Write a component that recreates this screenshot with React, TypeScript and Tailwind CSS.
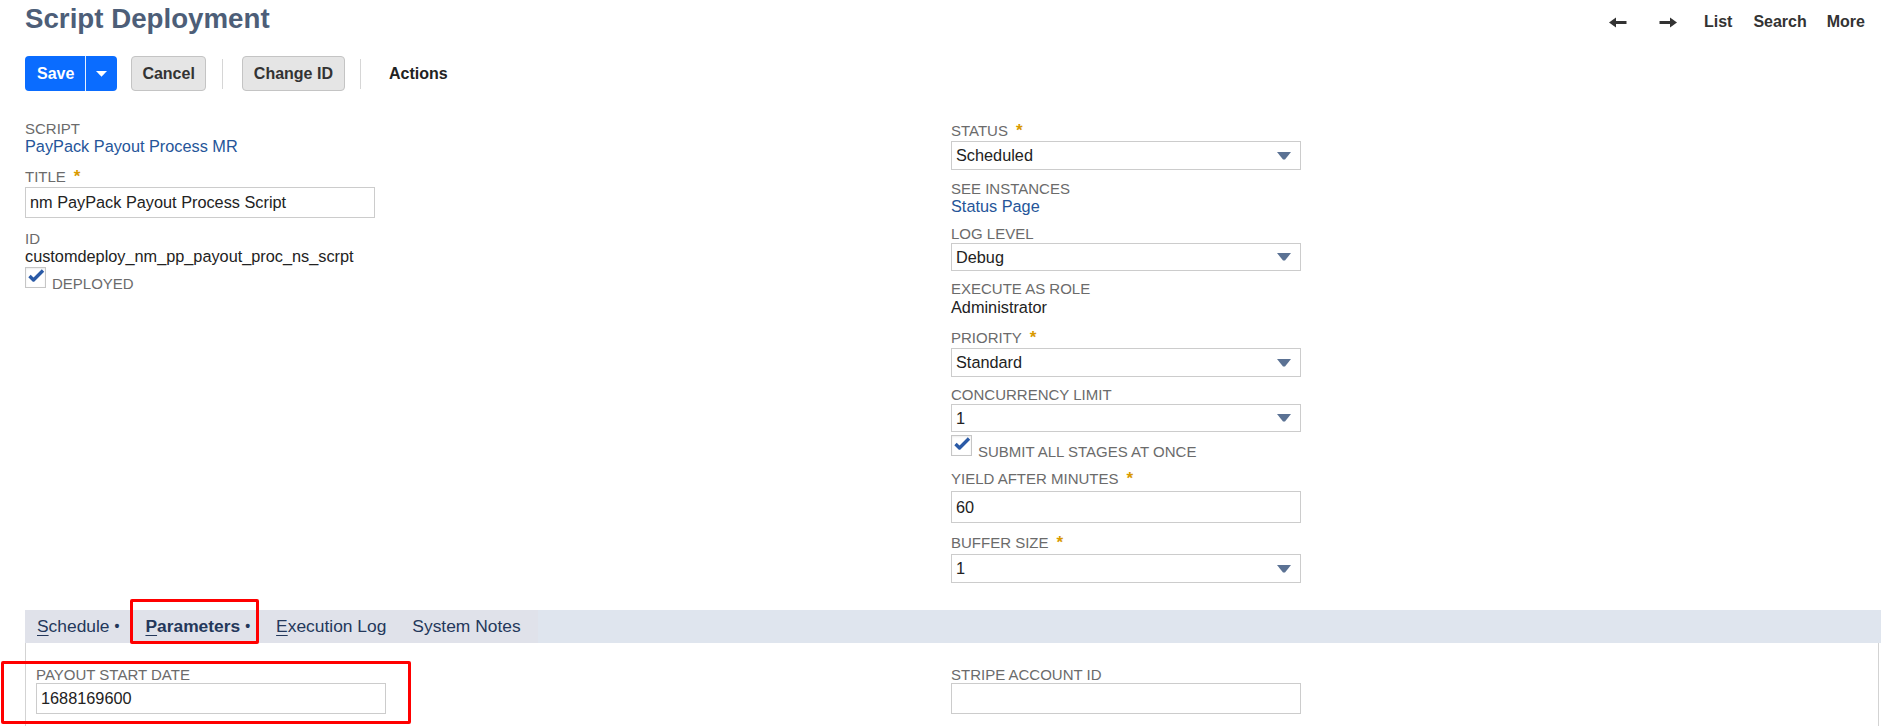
import type { ReactNode } from "react";

const Label = ({
  children,
  req,
  className = "",
}: {
  children: ReactNode;
  req?: boolean;
  className?: string;
}) => (
  <div
    className={`h-[17px] text-[15px] leading-[17px] uppercase text-[#6b6b6b] whitespace-nowrap ${className}`}
  >
    {children}
    {req && (
      <span className="ml-[8px] text-[17px] leading-none font-bold text-[#d99a00]">*</span>
    )}
  </div>
);

const Value = ({ children, className = "" }: { children: ReactNode; className?: string }) => (
  <div className={`text-[16.3px] leading-[19px] text-[#222] ${className}`}>{children}</div>
);

const Link = ({ children }: { children: ReactNode }) => (
  <a className="block text-[16.3px] leading-[19px] text-[#255599] cursor-pointer">{children}</a>
);

const TextInput = ({ value, className = "" }: { value: string; className?: string }) => (
  <div
    className={`w-[350px] border border-[#cccccc] bg-white flex items-center pl-[4px] text-[16.3px] text-[#222] ${className}`}
  >
    {value}
  </div>
);

const Select = ({ value, className = "h-[29px]" }: { value: string; className?: string }) => (
  <div
    className={`w-[350px] border border-[#cccccc] bg-white flex items-center justify-between pl-[4px] pr-[9px] text-[16.3px] text-[#222] ${className}`}
  >
    <span>{value}</span>
    <svg width="14" height="8" viewBox="0 0 14 8">
      <polygon points="0,0 14,0 8,7.5 6,7.5" fill="#5b7294" />
    </svg>
  </div>
);

const CheckRow = ({ label, className = "" }: { label: string; className?: string }) => (
  <div className={`flex items-end gap-[6px] ${className}`}>
    <div className="w-[21px] h-[21px] border border-[#c6c6c6] bg-white shadow-[inset_0_1px_2px_rgba(0,0,0,0.08)]">
      <svg width="19" height="19" viewBox="0 0 19 19">
        <path
          d="M3.5 8 L7.5 12 L17 2.5"
          stroke="#2a5aa6"
          strokeWidth="3.4"
          fill="none"
          strokeLinejoin="round"
        />
      </svg>
    </div>
    <span className="relative top-[4px] text-[15px] leading-[17px] uppercase text-[#6b6b6b]">
      {label}
    </span>
  </div>
);

const Arrow = ({ dir, className = "" }: { dir: "left" | "right"; className?: string }) => (
  <svg
    width="18"
    height="11"
    viewBox="0 0 18 11"
    className={className}
    style={dir === "right" ? { transform: "scaleX(-1)" } : undefined}
  >
    <path d="M3 5.5 H17.5" stroke="#333" strokeWidth="3" />
    <polygon points="0,5.5 7,0.5 7,10.5" fill="#333" />
  </svg>
);

const Tab = ({
  children,
  active,
  bullet,
  className = "",
}: {
  children: ReactNode;
  active?: boolean;
  bullet?: boolean;
  className?: string;
}) => (
  <div
    className={`relative flex items-center h-full px-[13px] text-[17.4px] text-[#24385b] whitespace-nowrap ${
      active ? "font-bold" : ""
    } ${className}`}
  >
    {children}
    {bullet && <span className="ml-[5px] font-bold text-[14px]">•</span>}
    {active && (
      <span className="absolute left-[-2px] right-[4px] top-[-11px] bottom-[-1px] border-[3px] border-[#ff0000] rounded-[2px]" />
    )}
  </div>
);

export default function App() {
  return (
    <div className="h-screen overflow-hidden bg-white pl-[25px] pr-[2px] font-['Liberation_Sans',Arial,sans-serif]">
      {/* header */}
      <div className="flex justify-between">
        <h1 className="mt-[3px] text-[27.7px] leading-[32px] font-bold text-[#4d5e78]">
          Script Deployment
        </h1>
        <div className="mt-[12px] flex items-center h-[20px] pr-[14px] text-[16px] font-bold text-[#333]">
          <Arrow dir="left" />
          <Arrow dir="right" className="ml-[32px]" />
          <span className="ml-[27px]">List</span>
          <span className="ml-[21px]">Search</span>
          <span className="ml-[20px]">More</span>
        </div>
      </div>

      {/* buttons */}
      <div className="mt-[21px] flex items-center text-[16px] font-bold">
        <div className="flex h-[35px] rounded-[4px] bg-[#0a6cff] text-white overflow-hidden">
          <span className="pl-[12px] pr-[11px] leading-[35px]">Save</span>
          <span className="w-px bg-white/90" />
          <span className="w-[31px] flex items-center justify-center">
            <svg width="11" height="6" viewBox="0 0 11 6">
              <polygon points="0,0 11,0 5.5,5.8" fill="#fff" />
            </svg>
          </span>
        </div>
        <button className="ml-[14px] h-[35px] px-[10px] border border-[#c4c4c4] bg-[#e5e5e5] rounded-[4px] text-[#333]">
          Cancel
        </button>
        <span className="ml-[16px] w-px h-[30px] bg-[#d6d6d6]" />
        <button className="ml-[19px] h-[35px] px-[11px] border border-[#c4c4c4] bg-[#e5e5e5] rounded-[4px] text-[#333]">
          Change ID
        </button>
        <span className="ml-[15px] w-px h-[30px] bg-[#d6d6d6]" />
        <span className="ml-[28px] text-[#222]">Actions</span>
      </div>

      {/* main fields */}
      <div className="mt-[29px] flex items-start">
        <div className="w-[926px]">
          <Label>Script</Label>
          <Link>PayPack Payout Process MR</Link>
          <Label req className="mt-[12px]">
            Title
          </Label>
          <TextInput className="mt-[2px] h-[31px]" value="nm PayPack Payout Process Script" />
          <Label className="mt-[12px]">ID</Label>
          <Value>customdeploy_nm_pp_payout_proc_ns_scrpt</Value>
          <CheckRow className="mt-[1px]" label="Deployed" />
        </div>

        <div className="pt-[2px]">
          <Label req>Status</Label>
          <Select className="mt-[2px] h-[29px]" value="Scheduled" />
          <Label className="mt-[10px]">See Instances</Label>
          <Link>Status Page</Link>
          <Label className="mt-[9px]">Log Level</Label>
          <Select className="mt-[1px] h-[28px]" value="Debug" />
          <Label className="mt-[9px]">Execute as Role</Label>
          <Value className="mt-[1px]">Administrator</Value>
          <Label req className="mt-[12px]">
            Priority
          </Label>
          <Select className="mt-[2px] h-[29px]" value="Standard" />
          <Label className="mt-[9px]">Concurrency Limit</Label>
          <Select className="mt-[1px] h-[28px]" value="1" />
          <CheckRow className="mt-[3px]" label="Submit all stages at once" />
          <Label req className="mt-[14px]">
            Yield after minutes
          </Label>
          <TextInput className="mt-[4px] h-[32px]" value="60" />
          <Label req className="mt-[11px]">
            Buffer Size
          </Label>
          <Select className="mt-[3px] h-[29px]" value="1" />
        </div>
      </div>

      {/* subtabs */}
      <div className="mt-[27px]">
        <div className="flex h-[33px] bg-[#dfe5ee] -mr-[2px]">
          <div className="flex h-full bg-[#e0e2ea] pr-[4px]">
            <Tab bullet className="pl-[12px]">
              <span>
                <u className="underline-offset-[3px]">S</u>chedule
              </span>
            </Tab>
            <Tab bullet active>
              <span>
                <u className="underline-offset-[3px]">P</u>arameters
              </span>
            </Tab>
            <Tab>
              <span>
                <u className="underline-offset-[3px]">E</u>xecution Log
              </span>
            </Tab>
            <Tab>System Notes</Tab>
          </div>
        </div>
        <div className="h-[200px] border-l border-r border-[#d3d3d3] pl-[10px] pt-[23px] flex items-start">
          <div className="w-[915px]">
            <div className="relative w-[350px]">
              <Label>Payout Start Date</Label>
              <TextInput className="h-[31px]" value="1688169600" />
              <span className="absolute left-[-35px] right-[-25px] top-[-5px] bottom-[-10px] border-[3px] border-[#ff0000] rounded-[2px]" />
            </div>
          </div>
          <div>
            <Label>Stripe Account ID</Label>
            <TextInput className="h-[31px]" value="" />
          </div>
        </div>
      </div>
    </div>
  );
}
